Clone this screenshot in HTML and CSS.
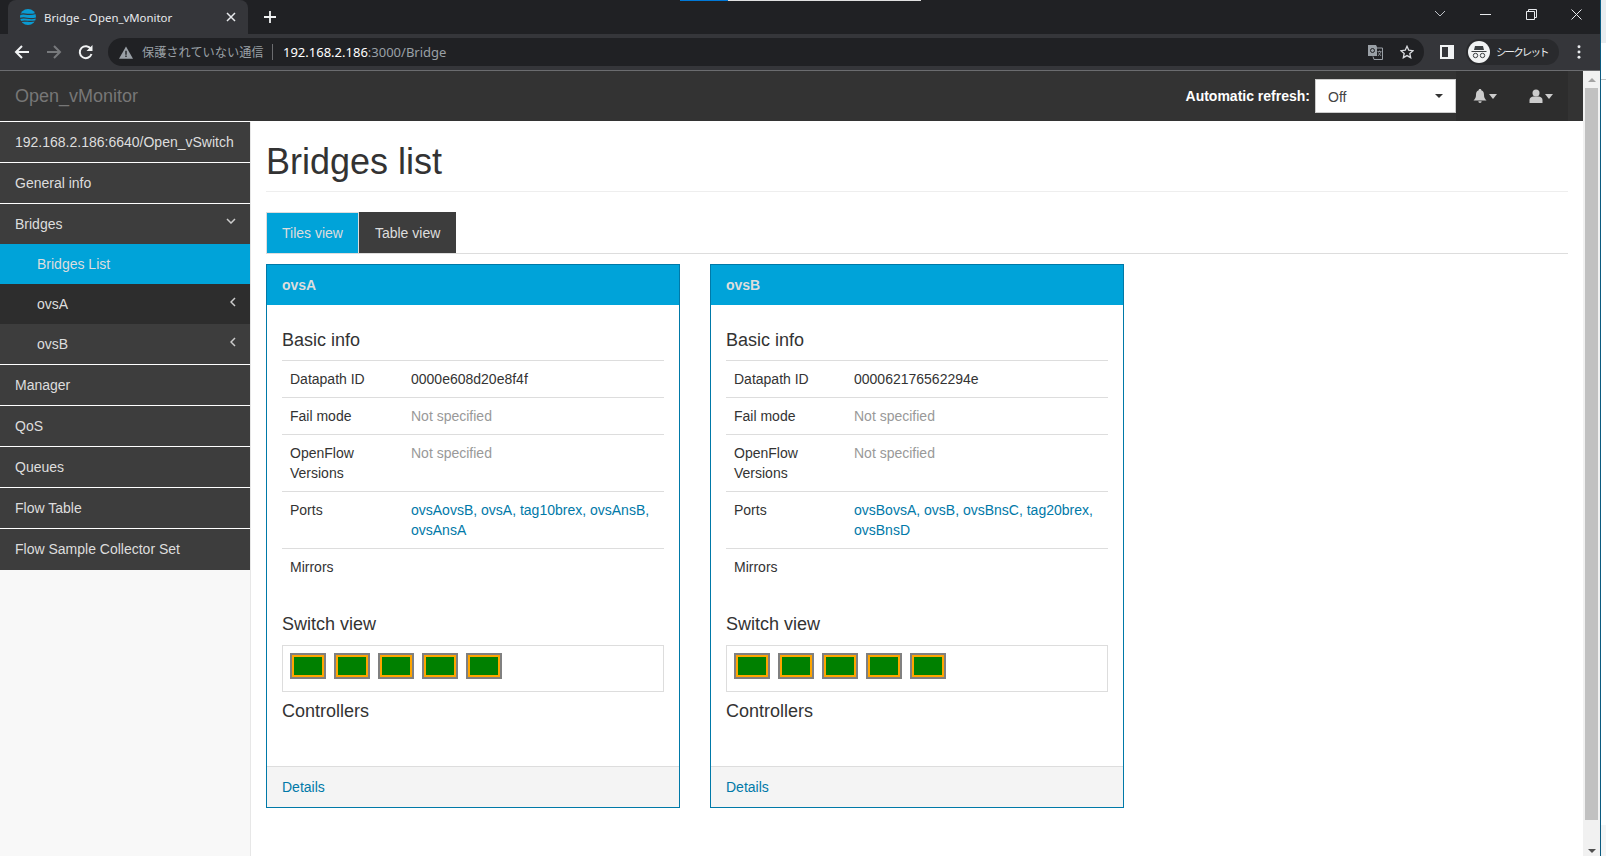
FILE: index.html
```html
<!DOCTYPE html>
<html lang="ja">
<head>
<meta charset="utf-8">
<title>Bridge - Open_vMonitor</title>
<link rel="stylesheet" href="styles.css">
</head>
<body>
<div class="window">
<div class="chrome">
  <div class="tabstrip">
    <div class="tab">
      <svg class="favicon" viewBox="0 0 16 16"><circle cx="8" cy="8" r="8" fill="#0a9bd3"/><path d="M0 5.500c4-2 7 1.500 16-1M0 9.500c5-2 9 1.500 16-.5M1 12.500c5-1.500 8 1 14-.5" stroke="#35363a" stroke-width="1.200" fill="none"/></svg>
      <span class="tab-title">Bridge - Open_vMonitor</span>
      <svg class="tab-close" viewBox="0 0 10 10"><path d="M1 1l8 8M9 1l-8 8" stroke="#e8eaed" stroke-width="1.500"/></svg>
    </div>
    <svg class="new-tab" viewBox="0 0 12 12"><path d="M6 0v12M0 6h12" stroke="#f1f3f4" stroke-width="1.800"/></svg>
    <div class="capture-mark"><i class="mark-blue"></i><i class="mark-white"></i></div>
    <div class="window-controls">
      <svg class="wc wc-chev" viewBox="0 0 12 8"><path d="M1 1l5 5 5-5" stroke="#bdc1c6" fill="none"/></svg>
      <svg class="wc wc-min" viewBox="0 0 11 11"><path d="M0 5.500h11" stroke="#e8eaed"/></svg>
      <svg class="wc wc-max" viewBox="0 0 11 11"><path d="M.5 2.500h8v8h-8zM2.500 2.500v-2h8v8h-2" stroke="#e8eaed" fill="none"/></svg>
      <svg class="wc wc-close" viewBox="0 0 11 11"><path d="M.5.500l10 10M10.500.500l-10 10" stroke="#e8eaed"/></svg>
    </div>
  </div>
  <div class="toolbar">
    <svg class="nav" viewBox="0 0 16 16"><path d="M15 8H2M8 2L2 8l6 6" stroke="#f1f3f4" stroke-width="2" fill="none"/></svg>
    <svg class="nav" viewBox="0 0 16 16"><path d="M1 8h13M8 2l6 6-6 6" stroke="#77797c" stroke-width="2" fill="none"/></svg>
    <svg class="nav" viewBox="0 0 16 16"><path d="M13.500 10a6 6 0 1 1-.6-5" stroke="#f1f3f4" stroke-width="2" fill="none"/><path d="M14.500 1v6h-6z" fill="#f1f3f4"/></svg>
    <div class="omnibox">
      <svg class="warn" viewBox="0 0 16 14"><path d="M8 0l8 14H0z" fill="#9aa0a6"/><path d="M7.200 5h1.600v4.500H7.200zM7.200 10.500h1.600V12H7.200z" fill="#202124"/></svg>
      <span class="insecure">保護されていない通信</span>
      <span class="url"><b>192.168.2.186</b>:3000/Bridge</span>
      <svg class="translate" viewBox="0 0 15 15"><path d="M0 0h8l1 2v9H0z" fill="#9aa0a6"/><path d="M8 3h6.500v11.500H6L5 11.500" stroke="#9aa0a6" fill="none"/><circle cx="4.500" cy="5.500" r="2" stroke="#202124" fill="none"/><path d="M9.500 6.500h4M11.500 5.500v1M10 11l3-4M10.500 7.500l2.500 3.500" stroke="#9aa0a6" stroke-width=".8" fill="none"/></svg>
      <svg class="star" viewBox="0 0 16 16"><path d="M8 1.500l2 4.500 4.800.5-3.600 3.200 1 4.800L8 12.100l-4.200 2.400 1-4.800L1.200 6.500 6 6z" stroke="#dadce0" stroke-width="1.500" fill="none"/></svg>
    </div>
    <svg class="side-panel" viewBox="0 0 14 14"><path d="M0 0h14v14H0zM2 2v10h6V2z" fill="#f1f3f4" fill-rule="evenodd"/></svg>
    <div class="profile">
      <svg class="incognito" viewBox="0 0 22 22"><circle cx="11" cy="11" r="11" fill="#f1f3f4"/><path d="M3.500 10h15v1h-15zM7 5h8l1 4H6z" fill="#3c4043"/><circle cx="7.500" cy="14.500" r="2.200" fill="none" stroke="#3c4043"/><circle cx="14.500" cy="14.500" r="2.200" fill="none" stroke="#3c4043"/></svg>
      <span class="profile-name">シークレット</span>
    </div>
    <svg class="menu-dots" viewBox="0 0 4 16"><circle cx="2" cy="2" r="1.700" fill="#e8eaed"/><circle cx="2" cy="8" r="1.700" fill="#e8eaed"/><circle cx="2" cy="14" r="1.700" fill="#e8eaed"/></svg>
  </div>
</div>

<div class="viewport">
  <div class="page">
    <header class="topbar">
      <span class="brand">Open_vMonitor</span>
      <div class="top-right">
        <label class="refresh-label">Automatic refresh:</label>
        <div class="select"><span class="select-value">Off</span><i class="caret caret-dark"></i></div>
        <div class="top-btn">
          <svg class="top-icon" viewBox="0 0 14 14"><path d="M7 0c1 0 1.300.6 1.300 1.200C10.500 1.800 11 4 11 6c0 3 1.200 4 2.500 5.500H.5C1.800 10 3 9 3 6c0-2 .5-4.200 2.700-4.800C5.700.6 6 0 7 0zM5.300 12.200h3.400a1.700 1.700 0 0 1-3.400 0z" fill="#ccc"/></svg>
          <i class="caret caret-light"></i>
        </div>
        <div class="top-btn">
          <svg class="top-icon" viewBox="0 0 14 14"><circle cx="7" cy="4" r="3.500" fill="#ccc"/><path d="M.5 14v-3C.5 9 2.500 7.500 4.500 7.500h5c2 0 4 1.500 4 3.500v3z" fill="#ccc"/></svg>
          <i class="caret caret-light"></i>
        </div>
      </div>
    </header>
    <div class="body">
      <nav class="sidebar">
        <a class="nav-item">192.168.2.186:6640/Open_vSwitch</a>
        <a class="nav-item">General info</a>
        <div class="nav-group">
          <a class="nav-item nav-open">Bridges<svg class="chev" viewBox="0 0 10 6"><path d="M1 1l4 4 4-4" stroke="#ccc" stroke-width="1.500" fill="none"/></svg></a>
          <a class="nav-sub nav-active">Bridges List</a>
          <a class="nav-sub nav-dark">ovsA<svg class="chev-left" viewBox="0 0 6 10"><path d="M5 1L1 5l4 4" stroke="#ccc" stroke-width="1.500" fill="none"/></svg></a>
          <a class="nav-sub">ovsB<svg class="chev-left" viewBox="0 0 6 10"><path d="M5 1L1 5l4 4" stroke="#ccc" stroke-width="1.500" fill="none"/></svg></a>
        </div>
        <a class="nav-item">Manager</a>
        <a class="nav-item">QoS</a>
        <a class="nav-item">Queues</a>
        <a class="nav-item">Flow Table</a>
        <a class="nav-item nav-last">Flow Sample Collector Set</a>
      </nav>
      <main class="content">
        <h1 class="page-title">Bridges list</h1>
        <div class="tabs">
          <a class="view-tab view-active">Tiles view</a>
          <a class="view-tab">Table view</a>
        </div>
        <div class="cards">
          <section class="card">
            <div class="card-head">ovsA</div>
            <div class="card-body">
              <h4 class="section-title first">Basic info</h4>
              <table class="info">
                <tr><th>Datapath ID</th><td>0000e608d20e8f4f</td></tr>
                <tr><th>Fail mode</th><td class="muted">Not specified</td></tr>
                <tr><th>OpenFlow Versions</th><td class="muted">Not specified</td></tr>
                <tr><th>Ports</th><td class="links">ovsAovsB, ovsA, tag10brex, ovsAnsB, ovsAnsA</td></tr>
                <tr><th>Mirrors</th><td></td></tr>
              </table>
              <h4 class="section-title">Switch view</h4>
              <div class="switch"><i class="port"></i><i class="port"></i><i class="port"></i><i class="port"></i><i class="port"></i></div>
              <h4 class="section-title">Controllers</h4>
            </div>
            <div class="card-foot">Details</div>
          </section>
          <section class="card">
            <div class="card-head">ovsB</div>
            <div class="card-body">
              <h4 class="section-title first">Basic info</h4>
              <table class="info info-narrow">
                <tr><th>Datapath ID</th><td>000062176562294e</td></tr>
                <tr><th>Fail mode</th><td class="muted">Not specified</td></tr>
                <tr><th>OpenFlow Versions</th><td class="muted">Not specified</td></tr>
                <tr><th>Ports</th><td class="links">ovsBovsA, ovsB, ovsBnsC, tag20brex, ovsBnsD</td></tr>
                <tr><th>Mirrors</th><td></td></tr>
              </table>
              <h4 class="section-title">Switch view</h4>
              <div class="switch"><i class="port"></i><i class="port"></i><i class="port"></i><i class="port"></i><i class="port"></i></div>
              <h4 class="section-title">Controllers</h4>
            </div>
            <div class="card-foot">Details</div>
          </section>
        </div>
      </main>
    </div>
  </div>
  <div class="scrollbar"><i class="sb-up"></i><i class="sb-thumb"></i><i class="sb-down"></i></div>
</div>
</div>
<div class="strip"><i class="strip-top"></i><i class="strip-line"></i><i class="strip-bottom"></i></div>
</body>
</html>
```
FILE: styles.css
```css
* { box-sizing: border-box; }
html, body { margin: 0; height: 100%; overflow: hidden; }
body { font-family: "Liberation Sans", Arial, "Noto Sans CJK JP", sans-serif; font-size: 14px; line-height: 20px; color: #333; background: #fff; display: flex; }
.window { width: 1601px; flex: none; height: 100%; border-right: 1px solid #0b5a80; display: flex; flex-direction: column; }
.strip { flex: 1; display: flex; flex-direction: column; }
.strip-top { display: block; height: 43px; background: #e9ecef; }
.strip-line { display: block; height: 1px; margin-top: 36px; background: #c8c8c8; }
.strip-bottom { display: block; margin-top: auto; height: 31px; background: #f5f5f5; }
.chrome { flex: none; }
.tabstrip { height: 34px; background: #202124; display: flex; align-items: flex-start; position: relative; }
.tab { width: 240px; height: 34px; margin-left: 8px; background: #35363a; border-radius: 8px 8px 0 0; display: flex; align-items: center; padding: 0 12px 0 12px; }
.favicon { width: 16px; height: 16px; flex: none; }
.tab-title { margin-left: 8px; padding-top: 1px; font-family: "Noto Sans", sans-serif; font-size: 11.400px; color: #e8eaed; flex: 1; white-space: nowrap; }
.tab-close { width: 10px; height: 10px; flex: none; }
.new-tab { width: 12px; height: 12px; margin: 11px 0 0 16px; flex: none; }
.capture-mark { position: absolute; left: 680px; top: 0; display: flex; height: 1px; }
.mark-blue { width: 48px; background: #0078d7; }
.mark-white { width: 193px; background: #e0e0e0; }
.window-controls { margin-left: auto; display: flex; align-items: center; height: 28px; }
.wc { display: block; flex: none; }
.wc-chev { width: 12px; height: 8px; margin-right: 34px; }
.wc-min { width: 11px; height: 11px; margin-right: 35px; }
.wc-max { width: 11px; height: 11px; margin-right: 34px; }
.wc-close { width: 11px; height: 11px; margin-right: 18px; }
.toolbar { height: 37px; background: #35363a; border-bottom: 1px solid #6b6c6f; display: flex; align-items: center; padding-left: 14px; }
.nav { width: 16px; height: 16px; margin-right: 16px; flex: none; }
.omnibox { width: 1316px; height: 28px; margin-left: -2px; flex: none; background: #202124; border-radius: 14px; display: flex; align-items: center; padding: 0 10px 0 11px; }
.warn { width: 14px; height: 13px; flex: none; }
.insecure { margin-left: 9px; font-size: 12.200px; color: #9aa0a6; width: 131px; flex: none; border-right: 1px solid #6b6c6f; line-height: 16px; white-space: nowrap; font-family: "Noto Sans CJK JP", sans-serif; }
.url { margin-left: 10px; font-family: "Noto Sans", sans-serif; font-size: 13px; color: #9aa0a6; flex: 1; white-space: nowrap; }
.url b { font-weight: 400; color: #fff; }
.translate { width: 15px; height: 15px; margin-right: 17px; flex: none; }
.star { width: 14px; height: 14px; flex: none; }
.side-panel { width: 14px; height: 14px; margin-left: 16px; flex: none; }
.profile { margin-left: 12px; height: 26px; width: 93px; background: #292a2d; border-radius: 13px; display: flex; align-items: center; padding-left: 2px; flex: none; }
.incognito { width: 22px; height: 22px; flex: none; }
.profile-name { margin-left: 6px; font-size: 10.500px; letter-spacing: -1.900px; color: #e8eaed; white-space: nowrap; font-family: "Noto Sans CJK JP", sans-serif; }
.menu-dots { width: 4px; height: 14px; margin-left: 18px; flex: none; }
.viewport { flex: 1; display: flex; min-height: 0; }
.page { flex: 1; display: flex; flex-direction: column; min-width: 0; }
.topbar { height: 51px; flex: none; background: #333; border-bottom: 1px solid #fff; display: flex; align-items: center; padding-left: 15px; }
.brand { font-size: 18px; color: #777; }
.top-right { margin-left: auto; display: flex; align-items: center; height: 50px; padding-right: 15px; }
.refresh-label { color: #fff; font-weight: 700; margin-right: 5px; }
.select { width: 141px; height: 34px; background: #fff; border: 1px solid #ccc; display: flex; align-items: center; justify-content: space-between; padding: 0 12px; color: #444; }
.select-value { padding-top: 2px; }
.caret { display: block; width: 0; height: 0; border-style: solid; border-color: transparent; }
.caret-dark { border-width: 4px 4px 0; border-top-color: #333; }
.caret-light { border-width: 5px 4.500px 0; border-top-color: #ccc; margin-left: 2px; }
.top-btn { height: 50px; width: 56px; padding-left: 2px; background: #2d2d2d; display: flex; align-items: center; justify-content: center; }
.top-icon { width: 14px; height: 14px; display: block; }
.body { flex: 1; display: flex; min-height: 0; }
.sidebar { width: 251px; flex: none; background: #f8f8f8; border-right: 1px solid #e7e7e7; }
.nav-item { display: flex; justify-content: space-between; align-items: flex-start; height: 41px; padding: 10px 15px; background: #3d3d3d; color: #ddd; border-bottom: 1px solid #fff; white-space: nowrap; }
.nav-open { height: 40px; border-bottom: 0; padding-right: 14px; }
.nav-last { border-bottom: 0; }
.nav-group { border-bottom: 1px solid #fff; }
.nav-sub { display: flex; justify-content: space-between; height: 40px; padding: 10px 14px 0 37px; background: #3d3d3d; color: #ddd; }
.nav-active { background: #00a3d9; color: #ddd; }
.nav-dark { background: #2d2d2d; }
.chev { width: 10px; height: 6px; margin-top: 4px; }
.chev-left { width: 6px; height: 10px; margin-top: 3px; }
.content { flex: 1; min-width: 0; padding: 0 15px; overflow: hidden; }
.page-title { margin: 20px 0 0; padding-bottom: 9px; font-size: 36px; font-weight: 400; line-height: 40px; color: #333; border-bottom: 1px solid #eee; }
.tabs { margin-top: 20px; display: flex; border-bottom: 1px solid #ddd; height: 42px; }
.view-tab { height: 41px; padding: 10px 15px 0; background: #3d3d3d; color: #ddd; border: 1px solid #3d3d3d; border-bottom: 0; }
.view-active { background: #00a3d9; border-color: #ddd; }
.cards { margin-top: 10px; display: flex; gap: 30px; }
.card { width: 414px; height: 544px; border: 1px solid #0079a8; display: flex; flex-direction: column; }
.card-head { height: 40px; flex: none; background: #00a3d9; color: #ddd; font-weight: 700; padding: 10px 15px; }
.card-body { flex: 1; padding: 0 15px; min-height: 0; }
.section-title { margin: 9px 0 11px; font-size: 18px; font-weight: 500; line-height: 20px; color: #333; }
.section-title.first { margin: 25px 0 10px; }
.info { width: 100%; border-collapse: collapse; margin-bottom: 29px; }
.info tr { border-top: 1px solid #ddd; }
.info th, .info td { padding: 8px; font-weight: 400; text-align: left; vertical-align: top; color: #333; line-height: 20px; }
.info th { width: 121px; }
.info-narrow th { width: 120px; }
.info td.muted { color: #999; }
.info td.links { color: #0079a8; }
.switch { height: 47px; border: 1px solid #ddd; padding: 7px; display: flex; gap: 8px; }
.port { display: block; width: 36px; height: 26px; background: green; border: 2px solid #808080; box-shadow: inset 0 0 0 2px orange; }
.card-foot { height: 41px; flex: none; background: #f4f4f4; border-top: 1px solid #ddd; color: #0079a8; padding: 10px 15px; }
.scrollbar { width: 17px; flex: none; background: #f1f1f1; display: flex; flex-direction: column; align-items: center; }
.sb-up { display: block; width: 0; height: 0; margin-top: 7px; border: 4px solid transparent; border-top: 0; border-bottom: 4px solid #a3a3a3; }
.sb-thumb { display: block; width: 13px; margin-top: 6px; flex: 1; background: #c1c1c1; }
.sb-down { display: block; width: 0; height: 0; margin: 29px 0 3px; border: 4px solid transparent; border-bottom: 0; border-top: 4px solid #505050; }
```
